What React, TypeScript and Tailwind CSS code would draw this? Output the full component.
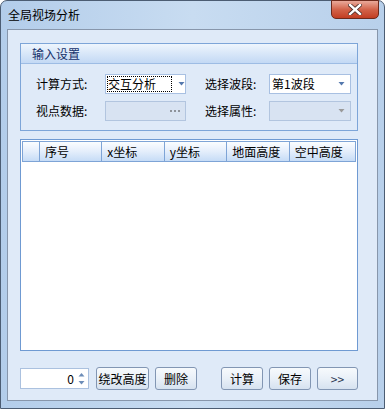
import React from "react";

const font = { fontFamily: '"SimSun","Noto Sans CJK SC","Liberation Sans",sans-serif' };

function Btn({ children, w }: { children: React.ReactNode; w: string }) {
  return (
    <div
      className={`${w} h-[23px] flex items-center justify-center rounded-[3px] border border-[#8296b3] bg-gradient-to-b from-[#f7fafd] via-[#e9f0f8] to-[#d6e2f0] text-[12px] text-black`}
    >
      {children}
    </div>
  );
}

function Arrow({ color }: { color: string }) {
  return (
    <svg width="7" height="4" viewBox="0 0 7 4">
      <path d="M0.5 0H6.5L3.5 3.5Z" fill={color} />
    </svg>
  );
}

export default function App() {
  const cols = [
    { w: "w-[17px]", t: "" },
    { w: "w-[63px]", t: "序号" },
    { w: "w-[63px]", t: "x坐标" },
    { w: "w-[63px]", t: "y坐标" },
    { w: "w-[63px]", t: "地面高度" },
    { w: "w-[66px]", t: "空中高度" },
  ];
  return (
    <div className="w-[385px] h-[409px] bg-white" style={font}>
      <div className="w-[385px] h-[409px] flex flex-col rounded-t-[7px] border border-[#4c5d73] bg-gradient-to-r from-[#b3cdea] via-[#c8dcf1] to-[#b8d0eb] px-[6px] pb-[7px]">
        {/* title bar */}
        <div className="h-[28px] flex items-start justify-between relative">
          <div className="pt-[7px] pl-[1px] text-[12px] text-black leading-[14px]">全局视场分析</div>
          <div className="mr-[-1px] w-[48px] h-[19px] mt-[-1px] rounded-b-[5px] border border-[#6e2a1c] bg-gradient-to-b from-[#e9a99a] via-[#d2634a] to-[#c23d22] flex items-center justify-center">
            <svg width="14" height="11" viewBox="0 0 14 11">
              <path d="M2 1L12 10M12 1L2 10" stroke="#4a2b26" strokeWidth="4" strokeLinecap="square" />
              <path d="M2 1L12 10M12 1L2 10" stroke="#ffffff" strokeWidth="2.4" strokeLinecap="square" />
            </svg>
          </div>
        </div>
        {/* client */}
        <div className="flex-1 border border-[#8796ab] bg-[#dfeaf8] pl-[12px] pt-[13px] flex flex-col">
          {/* group box */}
          <div className="w-[338px] h-[88px] border border-[#7da5d8] flex flex-col">
            <div className="h-[20px] bg-gradient-to-b from-[#eef5fd] to-[#c3d9f4] border-b border-[#9dbce4] pl-[11px] text-[12px] leading-[20px] text-[#15316a]">
              输入设置
            </div>
            <div className="flex flex-col gap-[7px] pt-[10px] pl-[15px]">
              <div className="flex items-center h-[20px]">
                <div className="w-[69px] text-[12px] text-black">计算方式:</div>
                <div className="w-[81px] h-[20px] bg-white border border-[#a8c0e2] flex items-center pl-[1px]">
                  <div className="w-[66px] h-[16px] border border-dotted border-black text-[12px] leading-[14px] text-black">交互分析</div>
                  <div className="ml-[6px]"><Arrow color="#5478ad" /></div>
                </div>
                <div className="w-[64px] ml-[19px] text-[12px] text-black">选择波段:</div>
                <div className="w-[82px] h-[20px] bg-white border border-[#a8c0e2] flex items-center justify-between pl-[2px] pr-[5px]">
                  <div className="text-[12px] text-black">第1波段</div>
                  <Arrow color="#5478ad" />
                </div>
              </div>
              <div className="flex items-center h-[20px]">
                <div className="w-[69px] text-[12px] text-black">视点数据:</div>
                <div className="w-[81px] h-[20px] bg-[#d8e3f2] border border-[#b2c5df] flex items-center justify-end pr-[5px]">
                  <svg width="10" height="2" viewBox="0 0 10 2">
                    <rect x="0" y="0" width="2" height="2" fill="#8d929a" />
                    <rect x="4" y="0" width="2" height="2" fill="#8d929a" />
                    <rect x="8" y="0" width="2" height="2" fill="#8d929a" />
                  </svg>
                </div>
                <div className="w-[64px] ml-[19px] text-[12px] text-black">选择属性:</div>
                <div className="w-[82px] h-[20px] bg-[#d8e3f2] border border-[#b2c5df] flex items-center justify-end pr-[5px]">
                  <Arrow color="#9a9a9a" />
                </div>
              </div>
            </div>
          </div>
          {/* table */}
          <div className="mt-[8px] w-[338px] h-[212px] border border-[#6f9ad2] bg-white p-[1px] flex flex-col">
            <div className="h-[21px] flex bg-gradient-to-b from-[#fbfdff] via-[#e4eefb] to-[#c6dcf6] border border-[#7ea4d6]">
              {cols.map((c, i) => (
                <div
                  key={i}
                  className={`${c.w} h-full ${i < cols.length - 1 ? "border-r border-[#7ea4d6]" : ""} pl-[5px] text-[12px] leading-[20px] text-black whitespace-nowrap`}
                >
                  {c.t}
                </div>
              ))}
            </div>
          </div>
          {/* bottom row */}
          <div className="mt-[16px] flex items-center w-[338px]">
            <div className="w-[69px] h-[21px] bg-white border border-[#abc1df] flex items-center justify-end pr-[3px]">
              <div className="text-[12px] text-black mr-[4px]">0</div>
              <div className="flex flex-col gap-[4px]">
                <svg width="7" height="4" viewBox="0 0 7 4"><path d="M0.5 3.5H6.5L3.5 0Z" fill="#6d8db8" /></svg>
                <Arrow color="#6d8db8" />
              </div>
            </div>
            <div className="ml-[7px]"><Btn w="w-[53px]">绕改高度</Btn></div>
            <div className="ml-[6px]"><Btn w="w-[42px]">删除</Btn></div>
            <div className="ml-[24px]"><Btn w="w-[42px]">计算</Btn></div>
            <div className="ml-[6px]"><Btn w="w-[42px]">保存</Btn></div>
            <div className="ml-[6px]"><Btn w="w-[41px]"><span className="text-[#2a3550]">&gt;&gt;</span></Btn></div>
          </div>
        </div>
      </div>
    </div>
  );
}
